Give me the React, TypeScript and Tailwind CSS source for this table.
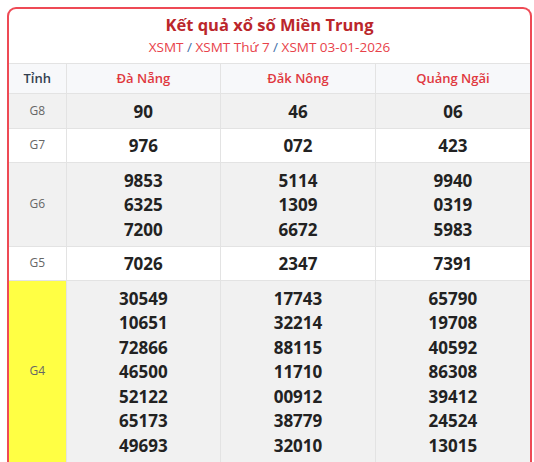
import React from 'react';

type Row = {
  label: string;
  values: string[][];
  highlight?: boolean;
};

const provinces = ['Đà Nẵng', 'Đắk Nông', 'Quảng Ngãi'];

const rows: Row[] = [
  { label: 'G8', values: [['90'], ['46'], ['06']] },
  { label: 'G7', values: [['976'], ['072'], ['423']] },
  {
    label: 'G6',
    values: [
      ['9853', '6325', '7200'],
      ['5114', '1309', '6672'],
      ['9940', '0319', '5983'],
    ],
  },
  { label: 'G5', values: [['7026'], ['2347'], ['7391']] },
  {
    label: 'G4',
    highlight: true,
    values: [
      ['30549', '10651', '72866', '46500', '52122', '65173', '49693'],
      ['17743', '32214', '88115', '11710', '00912', '38779', '32010'],
      ['65790', '19708', '40592', '86308', '39412', '24524', '13015'],
    ],
  },
];

export default function App() {
  return (
    <div className="min-h-[462px] bg-white pl-[7px] pr-[2px] pt-[7px] font-['Open_Sans',sans-serif]">
      <div className="overflow-hidden rounded-t-[9px] border-2 border-b-0 border-[#ee4a55]">
        {/* Title */}
        <div className="flex flex-col items-center pb-[5px] pt-[5px]">
          <h2 className="text-[16.5px] font-bold leading-[22px] text-[#bb262b]">
            Kết quả xổ số Miền Trung
          </h2>
          <div className="text-[13.5px] leading-[22px] text-[#e8424a]">
            <span>XSMT</span>
            <span className="text-[#3f6fa8]"> / </span>
            <span>XSMT Thứ 7</span>
            <span className="text-[#3f6fa8]"> / </span>
            <span>XSMT 03-01-2026</span>
          </div>
        </div>

        {/* Results table */}
        <table className="w-full table-fixed border-collapse">
          <colgroup>
            <col className="w-[57px]" />
            <col />
            <col />
            <col />
          </colgroup>
          <thead>
            <tr className="bg-[#f7f8fa]">
              <th className="border-y border-[#e3e3e3] py-[5px] text-[13px] font-semibold leading-[19px] text-[#333f4f]">
                Tỉnh
              </th>
              {provinces.map((p) => (
                <th
                  key={p}
                  className="border border-r-0 border-[#e3e3e3] py-[5px] text-[13px] font-semibold leading-[19px] text-[#e0393f]"
                >
                  {p}
                </th>
              ))}
            </tr>
          </thead>
          <tbody>
            {rows.map((row, i) => (
              <tr key={row.label} className={i % 2 === 0 ? 'bg-[#f1f1f1]' : 'bg-white'}>
                <td
                  className={`border-y border-[#e3e3e3] text-center text-[12px] text-[#666] ${
                    row.highlight ? 'bg-[#ffff44]' : ''
                  }`}
                >
                  {row.label}
                </td>
                {row.values.map((vals, j) => (
                  <td
                    key={j}
                    className="border border-r-0 border-[#e3e3e3] pb-[3.5px] pt-[5.5px] text-center text-[17px] font-bold leading-[24.5px] text-[#222]"
                  >
                    {vals.map((v) => (
                      <div key={v}>{v}</div>
                    ))}
                  </td>
                ))}
              </tr>
            ))}
          </tbody>
        </table>
      </div>
    </div>
  );
}
